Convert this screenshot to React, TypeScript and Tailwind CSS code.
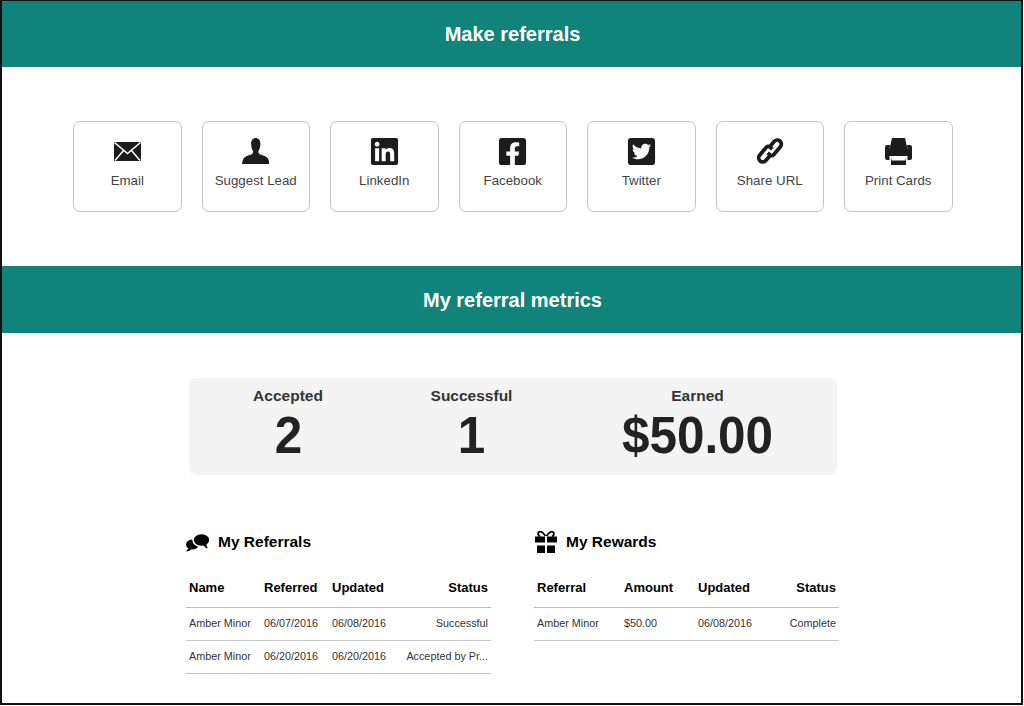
import { FaFacebookSquare, FaLinkedin, FaTwitterSquare } from "react-icons/fa";

const EnvelopeIcon = () => (
  <svg viewBox="0 0 27 19" className="w-[27px] h-[19px]" fill="#1c1c1c">
    <path d="M0 0h27v19H0z" />
    <path d="M0.500 0.500 13.500 11.500 26.500 0.500M1 18.500 9.500 8.500M26 18.500 17.500 8.500" fill="none" stroke="#fff" strokeWidth="1.500" />
  </svg>
);

const PersonIcon = () => (
  <svg viewBox="0 0 27 26" className="w-[27px] h-[26px]" fill="#1c1c1c">
    <path d="M13.500 0c3.200 0 4.900 2.400 4.900 5.800 0 3-.7 5.300-1.700 7-.6 1-.4 2.600.7 3.200 2.400 1.300 6.900 2 8.500 4.600.7 1.200 1.400 3.400 1.600 5.400H0c.2-2 .9-4.200 1.600-5.400 1.600-2.600 6.100-3.300 8.500-4.600 1.100-.6 1.300-2.200.7-3.200-1-1.700-1.700-4-1.700-7 0-3.400 1.700-5.800 4.900-5.800z" />
  </svg>
);

const LinkIcon = () => (
  <svg viewBox="0 0 24 24" className="w-[28px] h-[28px]" fill="none" stroke="#1c1c1c" strokeWidth="3.200">
    <g transform="rotate(-50 12 12)">
      <path d="M14.500 12.500V9.500a2 2 0 0 0-2-2H3.500a3.500 3.500 0 0 0 0 7H9" />
      <path d="M9.500 11.500V14.500a2 2 0 0 0 2 2H20.500a3.500 3.500 0 0 0 0-7H15" />
    </g>
  </svg>
);

const PrinterIcon = () => (
  <svg viewBox="0 0 27 27" className="w-[27px] h-[27px]" fill="#1c1c1c">
    <path d="M7 0h13l2.500 11h-18z" />
    <path d="M0 9a2 2 0 0 1 2-2h3L4.500 11h18L22 7h3a2 2 0 0 1 2 2v11a2 2 0 0 1-2 2h-2.500v-4h-18v4H2a2 2 0 0 1-2-2z" />
    <path d="M6 20.500h15V27H6z" />
    <path d="M6.500 20h14v2.500h-14z" fill="#fff" />
  </svg>
);

const BubblesIcon = () => (
  <svg viewBox="0 0 24 18" className="w-[25px] h-[19px]" fill="#000">
    <ellipse cx="6.500" cy="11" rx="6.500" ry="5" />
    <path d="M3 14 0 18c2.500 0 5-1 6-3z" />
    <ellipse cx="15.500" cy="6.500" rx="8.500" ry="6.500" stroke="#fff" strokeWidth="1.500" />
    <path d="M17 11c1 2 2.500 3.500 5 4-1-1-1.500-3-1.500-5z" />
  </svg>
);

const GiftIcon = () => (
  <svg viewBox="0 0 22 22" className="w-[22px] h-[22px]" fill="#000">
    <path d="M0 5.500h10v6H0zM12 5.500h10v6H12zM2 14.500h8V22H2zM12 14.500h8V22h-8z" />
    <path d="M10.500 5C8 1.500 5.500 0 4 1 2.500 2 3 4.500 5 5.500M11.500 5C14 1.500 16.500 0 18 1c1.500 1 1 3.500-1 4.500" fill="none" stroke="#000" strokeWidth="1.800" />
  </svg>
);

const actions = [
  { label: "Email", icon: <EnvelopeIcon /> },
  { label: "Suggest Lead", icon: <PersonIcon /> },
  { label: "LinkedIn", icon: <FaLinkedin className="text-[31px]" /> },
  { label: "Facebook", icon: <FaFacebookSquare className="text-[31px]" /> },
  { label: "Twitter", icon: <FaTwitterSquare className="text-[31px]" /> },
  { label: "Share URL", icon: <LinkIcon /> },
  { label: "Print Cards", icon: <PrinterIcon /> },
];

const metrics = [
  { label: "Accepted", value: "2", cls: "w-[198px]" },
  { label: "Successful", value: "1", cls: "w-[169px]" },
  { label: "Earned", value: "$50.00", cls: "w-[283px]" },
];

const SectionHeader = ({ title, cls }: { title: string; cls: string }) => (
  <div className={`${cls} pl-[2px] bg-[#10847a] text-white flex items-center justify-center text-[20px] font-bold`}>
    {title}
  </div>
);

interface DataTableProps {
  title: string;
  icon: React.ReactNode;
  widths: string[];
  headers: string[];
  rows: string[][];
}

const DataTable = ({ title, icon, widths, headers, rows }: DataTableProps) => (
  <div className="w-[305px]">
    <div className="h-[26px] flex items-center gap-[8px] text-[15.5px] font-bold text-black">
      <span className="w-[24px] flex justify-center">{icon}</span>
      {title}
    </div>
    <table className="w-full table-fixed mt-[13px]">
      <colgroup>
        {widths.map((w, i) => (
          <col key={i} className={w} />
        ))}
      </colgroup>
      <thead>
        <tr className="h-[39px] border-b border-[#bdbdbd] text-[13px] font-bold text-black">
          {headers.map((h, i) => (
            <th key={h} className={`px-[3px] font-bold ${i === 3 ? "text-right" : "text-left"}`}>
              {h}
            </th>
          ))}
        </tr>
      </thead>
      <tbody>
        {rows.map((row, r) => (
          <tr key={r} className="h-[33px] border-b border-[#c8c8c8] text-[10.8px] text-[#333]">
            {row.map((c, i) => (
              <td key={i} className={`px-[3px] truncate ${i === 3 ? "text-right" : "text-left"}`}>
                {c}
              </td>
            ))}
          </tr>
        ))}
      </tbody>
    </table>
  </div>
);

export default function App() {
  return (
    <div className="w-[1024px] h-[706px] bg-white overflow-hidden font-['Liberation_Sans',Arial,sans-serif]">
      <div className="w-[1023px] h-[705px] border border-[#111] border-l-2 border-r-2 border-b-2">
        <SectionHeader title="Make referrals" cls="h-[66px]" />
        <div className="h-[199px] pt-[54px] pl-[71px] flex gap-[20px]">
          {actions.map((a) => (
            <div
              key={a.label}
              className="w-[108.5px] h-[91px] border border-[#c4c4c4] rounded-[7px] flex flex-col items-center text-[#444] text-[13.3px]"
            >
              <div className="h-[46px] mt-[6px] flex items-center justify-center text-[#1c1c1c]">{a.icon}</div>
              <div className="mt-[-3px]">{a.label}</div>
            </div>
          ))}
        </div>
        <SectionHeader title="My referral metrics" cls="h-[67px]" />
        <div className="mt-[45px] ml-[187px] w-[648px] h-[97px] rounded-[7px] bg-[#f4f4f4] flex">
          {metrics.map((m) => (
            <div key={m.label} className={`${m.cls} shrink-0 flex flex-col items-center pt-[9px]`}>
              <div className="text-[15.5px] font-bold text-[#333] leading-[18px]">{m.label}</div>
              <div className="text-[52px] font-bold text-[#222] leading-[60px] scale-x-95">{m.value}</div>
            </div>
          ))}
        </div>
        <div className="mt-[54px] ml-[184px] flex gap-[43px]">
          <DataTable
            title="My Referrals"
            icon={<BubblesIcon />}
            widths={["w-[75px]", "w-[68px]", "w-[70px]", "w-[92px]"]}
            headers={["Name", "Referred", "Updated", "Status"]}
            rows={[
              ["Amber Minor", "06/07/2016", "06/08/2016", "Successful"],
              ["Amber Minor", "06/20/2016", "06/20/2016", "Accepted by Pr..."],
            ]}
          />
          <DataTable
            title="My Rewards"
            icon={<GiftIcon />}
            widths={["w-[87px]", "w-[74px]", "w-[72px]", "w-[72px]"]}
            headers={["Referral", "Amount", "Updated", "Status"]}
            rows={[["Amber Minor", "$50.00", "06/08/2016", "Complete"]]}
          />
        </div>
      </div>
    </div>
  );
}
